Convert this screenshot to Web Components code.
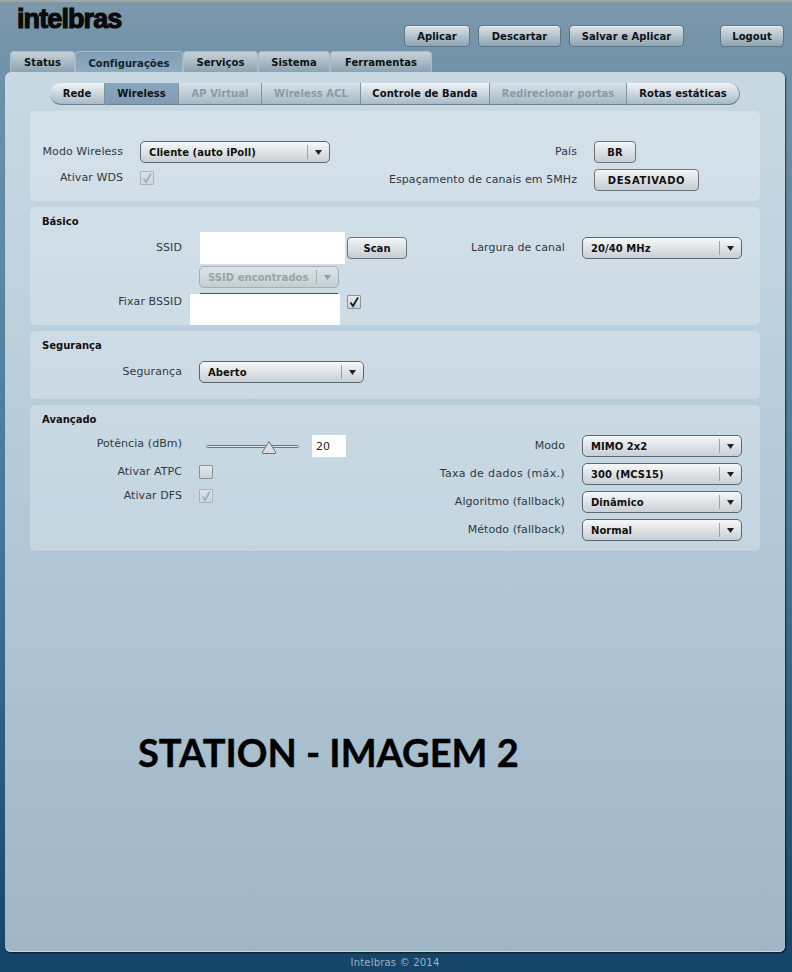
<!DOCTYPE html>
<html lang="pt">
<head>
<meta charset="utf-8">
<title>Intelbras</title>
<style>
  html, body { margin: 0; height: 972px; overflow: hidden; }
  body {
    background: linear-gradient(#7d98ab 0, #7293a9 60px, #45799b 520px, #154568 960px);
    border-top: 2px solid #a0a9a8;
    box-sizing: border-box;
    font-family: "DejaVu Sans", Verdana, sans-serif;
  }
</style>
</head>
<body>
<ib-header></ib-header>
<ib-tabs>
  <ib-tab w="65">Status</ib-tab>
  <ib-tab w="108" active>Configurações</ib-tab>
  <ib-tab w="75">Serviços</ib-tab>
  <ib-tab w="72">Sistema</ib-tab>
  <ib-tab w="102">Ferramentas</ib-tab>
</ib-tabs>
<ib-panel>
  <ib-subnav>
    <ib-subitem w="55" first>Rede</ib-subitem>
    <ib-subitem w="74" active>Wireless</ib-subitem>
    <ib-subitem w="83" disabled>AP Virtual</ib-subitem>
    <ib-subitem w="99" disabled>Wireless ACL</ib-subitem>
    <ib-subitem w="129">Controle de Banda</ib-subitem>
    <ib-subitem w="137" disabled>Redirecionar portas</ib-subitem>
    <ib-subitem w="113" last>Rotas estáticas</ib-subitem>
  </ib-subnav>

  <ib-fieldset h="90">
    <div slot="left" style="display:contents">
      <ib-field label="Modo Wireless" w="93">
        <ib-select w="190" value="Cliente (auto iPoll)"></ib-select>
      </ib-field>
      <ib-field label="Ativar WDS" w="93" lh="18"><ib-check checked disabled></ib-check></ib-field>
    </div>
    <div slot="right" style="display:contents">
      <ib-field label="País" w="217"><ib-button form w="42">BR</ib-button></ib-field>
      <ib-field label="Espaçamento de canais em 5MHz" w="217"><ib-button form w="105" style="--ls:.6px">DESATIVADO</ib-button></ib-field>
    </div>
  </ib-fieldset>

  <ib-fieldset h="118" title="Básico">
    <div slot="left" style="display:contents">
      <ib-field label="SSID" w="152">
        <ib-blank w="145" top="-5" bottom="-5" style="margin-left:1px"></ib-blank>
        <ib-button form w="60" style="margin-left:2px">Scan</ib-button>
      </ib-field>
      <ib-field w="152" style="margin-top:1px"><ib-select w="140" value="SSID encontrados" disabled></ib-select></ib-field>
      <ib-field label="Fixar BSSID" w="152" lh="16">
        <ib-blank w="140" top="0" bottom="-9" left="-10" line style="margin-left:1px"></ib-blank>
        <ib-check checked style="margin-left:7px;margin-top:1px"></ib-check>
      </ib-field>
    </div>
    <div slot="right" style="display:contents">
      <ib-field label="Largura de canal" w="205"><ib-select w="160" value="20/40 MHz"></ib-select></ib-field>
    </div>
  </ib-fieldset>

  <ib-fieldset h="68" title="Segurança">
    <div slot="left" style="display:contents">
      <ib-field label="Segurança" w="152"><ib-select w="165" value="Aberto"></ib-select></ib-field>
    </div>
  </ib-fieldset>

  <ib-fieldset h="146" title="Avançado">
    <div slot="left" style="display:contents">
      <ib-field label="Potência (dBm)" w="152" lh="18">
        <ib-slider style="margin-left:7px"></ib-slider>
        <ib-number style="margin-left:13px">20</ib-number>
      </ib-field>
      <ib-field label="Ativar ATPC" w="152" lh="18"><ib-check></ib-check></ib-field>
      <ib-field label="Ativar DFS" w="152" lh="18" style="margin-top:-4px"><ib-check checked disabled></ib-check></ib-field>
    </div>
    <div slot="right" style="display:contents">
      <ib-field label="Modo" w="205"><ib-select w="160" value="MIMO 2x2"></ib-select></ib-field>
      <ib-field label="Taxa de dados (máx.)" w="205" style="--label-ls:.35px"><ib-select w="160" value="300 (MCS15)"></ib-select></ib-field>
      <ib-field label="Algoritmo (fallback)" w="205"><ib-select w="160" value="Dinâmico"></ib-select></ib-field>
      <ib-field label="Método (fallback)" w="205"><ib-select w="160" value="Normal"></ib-select></ib-field>
    </div>
  </ib-fieldset>

  <ib-caption>STATION - IMAGEM 2</ib-caption>
</ib-panel>
<ib-footer>Intelbras © 2014</ib-footer>

<script>
const buttonFace = `
  box-sizing: border-box;
  display: flex;
  align-items: center;
  justify-content: center;
  height: 22px;
  font: bold 10px "DejaVu Sans", Verdana, sans-serif;
  letter-spacing: var(--ls, .05px);
  color: #111;
  white-space: nowrap;
`

class Component extends HTMLElement {
  constructor() {
    super()
    this.attachShadow({ mode: 'open' })
  }

  connectedCallback () {
    this.render()
  }

  attr (name, fallback) {
    return this.hasAttribute(name) ? this.getAttribute(name) : fallback
  }
}

class Header extends Component {
  render () {
    this.shadowRoot.innerHTML = `
      <style>
        :host { display: flex; box-sizing: border-box; height: 49px; padding: 23px 8px 0 18px; position: relative; }
        .logo {
          position: absolute; left: 17px; top: 1px;
          font: bold 27px/32px "Liberation Sans", sans-serif;
          letter-spacing: -.9px;
          color: #0a0a0a;
          -webkit-text-stroke: 1.1px #0a0a0a;
        }
        nav { display: flex; margin-left: auto; }
      </style>
      <div class="logo">intelbras</div>
      <nav>
        <ib-button w="66">Aplicar</ib-button>
        <ib-button w="83" style="margin-left:8px">Descartar</ib-button>
        <ib-button w="115" style="margin-left:8px">Salvar e Aplicar</ib-button>
        <ib-button w="64" style="margin-left:36px">Logout</ib-button>
      </nav>
    `
  }
}

class Button extends Component {
  render () {
    const form = this.hasAttribute('form')
    this.shadowRoot.innerHTML = `
      <style>
        :host { display: block; flex: none; width: ${this.attr('w', 60)}px; }
        div {
          ${buttonFace}
          border: 1px solid ${form ? '#6c7479' : '#5f7382'};
          border-radius: 4px;
          background: ${form ? 'linear-gradient(#f3f5f6, #c5cdd3)' : 'linear-gradient(#d9e2e7, #8ea5b4)'};
          box-shadow: inset 0 1px 0 #ffffff80;
        }
      </style>
      <div><slot></slot></div>
    `
  }
}

class Tabs extends Component {
  render () {
    this.shadowRoot.innerHTML = `
      <style>
        :host { display: flex; height: 21px; padding-left: 10px; position: relative; z-index: 1; }
      </style>
      <slot></slot>
    `
  }
}

class Tab extends Component {
  render () {
    const active = this.hasAttribute('active')
    this.shadowRoot.innerHTML = `
      <style>
        :host {
          ${buttonFace}
          height: 21px;
          width: ${this.attr('w', 60)}px;
          padding-top: ${active ? 2 : 0}px;
          border-radius: 4px 4px 0 0;
          border: 1px solid #a8bac6;
          border-bottom: 0;
          background: ${active ? 'linear-gradient(#7f9fb6, #8dabc0)' : 'linear-gradient(#c6d2d9, #8ba3b2)'};
          color: ${active ? '#14222c' : '#111'};
        }
      </style>
      <slot></slot>
    `
  }
}

class Panel extends Component {
  render () {
    this.shadowRoot.innerHTML = `
      <style>
        :host {
          display: block;
          box-sizing: border-box;
          width: 780px;
          height: 880px;
          margin-left: 5px;
          padding: 11px 25px 0;
          border-radius: 6px;
          background: linear-gradient(#c9d9e3, #b3c9d8 50%, #a1b6c4);
          box-shadow: inset 0 -1px 0 #c5d8e2, 1px 1px 2px #000000a0;
        }
      </style>
      <slot></slot>
    `
  }
}

class Subnav extends Component {
  render () {
    this.shadowRoot.innerHTML = `
      <style>
        :host { display: flex; height: 22px; margin: 0 0 6px 20px; }
      </style>
      <slot></slot>
    `
  }
}

class SubItem extends Component {
  render () {
    const active = this.hasAttribute('active')
    const disabled = this.hasAttribute('disabled')
    const radius = this.hasAttribute('first') ? '11px 0 0 11px' : this.hasAttribute('last') ? '0 11px 11px 0' : '0'
    const face = active
      ? 'linear-gradient(#87a5bb, #7f9eb5)'
      : disabled ? 'linear-gradient(#d8e2e8, #a6b9c6)' : 'linear-gradient(#f1f4f6, #a7bac7)'
    this.shadowRoot.innerHTML = `
      <style>
        :host {
          ${buttonFace}
          width: ${this.attr('w', 60)}px;
          border-radius: ${radius};
          border-bottom: 1px solid #6d8291;
          border-right: 1px solid #7e93a2;
          background: ${face};
          color: ${disabled ? '#8c9aa4' : '#111'};
        }
      </style>
      <slot></slot>
    `
  }
}

class Fieldset extends Component {
  render () {
    const title = this.attr('title', '')
    this.removeAttribute('title')
    this.shadowRoot.innerHTML = `
      <style>
        :host {
          display: block;
          box-sizing: border-box;
          height: ${this.attr('h', 90)}px;
          margin-bottom: 6px;
          border-radius: 5px;
          background: #ffffff40;
        }
        h2 {
          box-sizing: border-box;
          height: 30px;
          margin: 0;
          padding: 8px 0 0 12px;
          font: bold 10px/13px "DejaVu Sans", sans-serif;
          color: #111;
        }
        .cols { display: grid; grid-template-columns: 330px 400px; }
        .col { display: flex; flex-direction: column; gap: 6px; }
      </style>
      <h2>${title}</h2>
      <div class="cols">
        <div class="col"><slot name="left"></slot></div>
        <div class="col"><slot name="right"></slot></div>
      </div>
    `
  }
}

class Field extends Component {
  render () {
    const label = this.attr('label', '')
    this.shadowRoot.innerHTML = `
      <style>
        :host { display: flex; align-items: flex-start; min-height: 22px; }
        label {
          flex: none;
          width: ${this.attr('w', 152)}px;
          margin-right: 17px;
          text-align: right;
          white-space: nowrap;
          font: 11px/${this.attr('lh', 22)}px "DejaVu Sans", sans-serif;
          letter-spacing: var(--label-ls, .08px);
          color: #2f3a41;
        }
      </style>
      <label>${label}</label>
      <slot></slot>
    `
  }
}

class Select extends Component {
  render () {
    const disabled = this.hasAttribute('disabled')
    this.shadowRoot.innerHTML = `
      <style>
        :host { display: block; flex: none; width: ${this.attr('w', 160)}px; }
        .box {
          ${buttonFace}
          justify-content: flex-start;
          padding-left: 8px;
          border: 1px solid ${disabled ? '#a3afb7' : '#5e676e'};
          border-radius: 5px;
          background: ${disabled ? 'linear-gradient(#dde4e8, #c3ced5)' : 'linear-gradient(#f6f8f8, #c8cfd5)'};
          color: ${disabled ? '#98a3aa' : '#111'};
        }
        .value { flex: 1; }
        .arrow {
          flex: none;
          display: flex;
          align-items: center;
          justify-content: center;
          width: 21px;
          height: 14px;
          border-left: 1px solid ${disabled ? '#a9b5bd' : '#9ca4aa'};
        }
      </style>
      <div class="box">
        <span class="value">${this.attr('value', '')}</span>
        <span class="arrow">
          <svg width="7" height="5" viewBox="0 0 7 5"><path d="M0 0H7L3.5 5Z" fill="${disabled ? '#8f9ba3' : '#1c2226'}"/></svg>
        </span>
      </div>
    `
  }
}

class Check extends Component {
  render () {
    const checked = this.hasAttribute('checked')
    const disabled = this.hasAttribute('disabled')
    const mark = checked
      ? `<svg width="12" height="12" viewBox="0 0 12 12"><path d="M2.5 6.5L5 10L10 1.5" fill="none" stroke="${disabled ? '#a3aeb5' : '#1a1f23'}" stroke-width="1.8"/></svg>`
      : ''
    this.shadowRoot.innerHTML = `
      <style>
        :host {
          box-sizing: border-box;
          display: flex;
          align-items: center;
          justify-content: center;
          flex: none;
          width: 14px;
          height: 14px;
          margin-top: 2px;
          border: 1px solid ${disabled ? '#a9b4bb' : '#8a9399'};
          border-radius: 1px;
          background: ${disabled ? 'linear-gradient(#dbe3e8, #ccd6dc)' : 'linear-gradient(#e6eaed, #c9d1d6)'};
        }
      </style>
      ${mark}
    `
  }
}

// white boxes painted over the inputs in the reference
class Blank extends Component {
  render () {
    const line = this.hasAttribute('line')
    this.shadowRoot.innerHTML = `
      <style>
        :host { display: block; position: relative; flex: none; width: ${this.attr('w', 140)}px; height: 22px; }
        .paint {
          position: absolute;
          top: ${this.attr('top', 0)}px;
          bottom: ${this.attr('bottom', 0)}px;
          left: ${this.attr('left', 0)}px;
          right: 0;
          background: #fff;
        }
        .line { position: absolute; top: -1px; left: 0; right: 2px; height: 1px; background: #4c5358; }
      </style>
      ${line ? '<div class="line"></div>' : ''}
      <div class="paint"></div>
    `
  }
}

class Slider extends Component {
  render () {
    this.shadowRoot.innerHTML = `
      <style>
        :host { display: block; position: relative; flex: none; width: 93px; height: 22px; }
        .track {
          position: absolute; left: 0; right: 0; top: 10px; height: 3px;
          box-sizing: border-box;
          border: 1px solid #6d767c;
          border-radius: 2px;
          background: #dfe5e9;
        }
        svg { position: absolute; left: 56px; top: 6px; }
      </style>
      <div class="track"></div>
      <svg width="14" height="13" viewBox="0 0 14 13">
        <path d="M7 .5L13.5 11V12.5H.5V11Z" fill="#d9dee2" stroke="#6d767c"/>
      </svg>
    `
  }
}

class NumberBox extends Component {
  render () {
    this.shadowRoot.innerHTML = `
      <style>
        :host {
          box-sizing: border-box;
          display: flex;
          align-items: center;
          flex: none;
          width: 34px;
          height: 22px;
          padding-left: 4px;
          background: #fff;
          font: 11px "DejaVu Sans", sans-serif;
          color: #222;
        }
      </style>
      <slot></slot>
    `
  }
}

class Caption extends Component {
  render () {
    this.shadowRoot.innerHTML = `
      <style>
        :host {
          display: block;
          margin: 178px 0 0 108px;
          font: bold 38px/46px Lato, "Open Sans", sans-serif;
          color: #000;
          -webkit-text-stroke: .4px #000;
          white-space: nowrap;
        }
      </style>
      <slot></slot>
    `
  }
}

class Footer extends Component {
  render () {
    this.shadowRoot.innerHTML = `
      <style>
        :host {
          display: block;
          height: 20px;
          padding-right: 2px;
          text-align: center;
          font: 10px/21px "DejaVu Sans", sans-serif;
          letter-spacing: .2px;
          color: #9db3c3;
        }
      </style>
      <slot></slot>
    `
  }
}

customElements.define('ib-button', Button)
customElements.define('ib-header', Header)
customElements.define('ib-tabs', Tabs)
customElements.define('ib-tab', Tab)
customElements.define('ib-panel', Panel)
customElements.define('ib-subnav', Subnav)
customElements.define('ib-subitem', SubItem)
customElements.define('ib-fieldset', Fieldset)
customElements.define('ib-field', Field)
customElements.define('ib-select', Select)
customElements.define('ib-check', Check)
customElements.define('ib-blank', Blank)
customElements.define('ib-slider', Slider)
customElements.define('ib-number', NumberBox)
customElements.define('ib-caption', Caption)
customElements.define('ib-footer', Footer)
</script>
</body>
</html>
